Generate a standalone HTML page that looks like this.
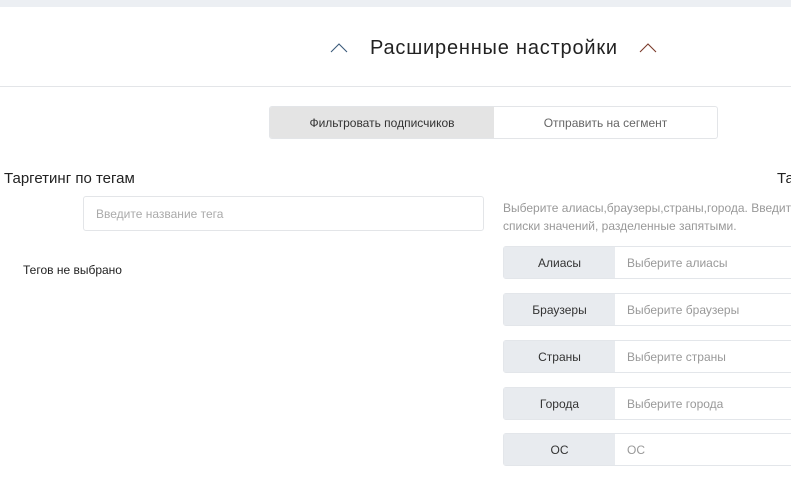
<!DOCTYPE html>
<html><head><meta charset="utf-8"><style>
*{box-sizing:border-box;margin:0;padding:0}
body{width:791px;height:479px;overflow:hidden;background:#fff;font-family:"Liberation Sans","DejaVu Sans",sans-serif;position:relative;color:#222}
.a{position:absolute;white-space:nowrap}
.row{position:absolute;left:503px;width:300px;height:33px;border:1px solid #e3e6ea;border-radius:3px;display:flex;font-size:12px}
.row .l{width:111px;background:#e8ebef;display:flex;align-items:center;justify-content:center;color:#333}
.row .p{padding-left:12px;display:flex;align-items:center;color:#999}
</style></head><body>
<div class="a" style="left:0;top:0;width:791px;height:7px;background:#eceff3"></div>
<svg class="a" style="left:330px;top:43px" width="18" height="10"><path d="M1 9 L9 1 L17 9" fill="none" stroke="#3b5a7a" stroke-width="1.1"/></svg>
<div class="a" style="left:370px;top:37px;font-size:20px;color:#222;letter-spacing:0.8px">Расширенные настройки</div>
<svg class="a" style="left:639px;top:43px" width="18" height="10"><path d="M1 9 L9 1 L17 9" fill="none" stroke="#7a3a2a" stroke-width="1.1"/></svg>
<div class="a" style="left:0;top:86px;width:791px;height:1px;background:#e3e5e8"></div>
<div class="a" style="left:269px;top:106px;width:449px;height:33px;border:1px solid #e3e5e8;border-radius:3px;display:flex;font-size:12px;overflow:hidden">
<div style="width:224px;background:#e4e4e4;display:flex;align-items:center;justify-content:center;color:#333">Фильтровать подписчиков</div>
<div style="flex:1;display:flex;align-items:center;justify-content:center;color:#666">Отправить на сегмент</div></div>
<div class="a" style="left:4px;top:170px;font-size:15px;color:#222">Таргетинг по тегам</div>
<div class="a" style="left:83px;top:196px;width:401px;height:35px;border:1px solid #e3e5e8;border-radius:3px;font-size:12px;color:#aaa;padding:10px 0 0 12px">Введите название тега</div>
<div class="a" style="left:23px;top:263px;font-size:12px;color:#222">Тегов не выбрано</div>
<div class="a" style="left:777px;top:170px;font-size:15px">Та</div>
<div class="a" style="left:503px;top:199px;font-size:12px;color:#999;line-height:18px">Выберите алиасы,браузеры,страны,города. Введите<br>списки значений, разделенные запятыми.</div>
<div class="row" style="top:246px"><div class="l">Алиасы</div><div class="p">Выберите алиасы</div></div>
<div class="row" style="top:293px"><div class="l">Браузеры</div><div class="p">Выберите браузеры</div></div>
<div class="row" style="top:340px"><div class="l">Страны</div><div class="p">Выберите страны</div></div>
<div class="row" style="top:387px"><div class="l">Города</div><div class="p">Выберите города</div></div>
<div class="row" style="top:433px"><div class="l">ОС</div><div class="p">ОС</div></div>
</body></html>
